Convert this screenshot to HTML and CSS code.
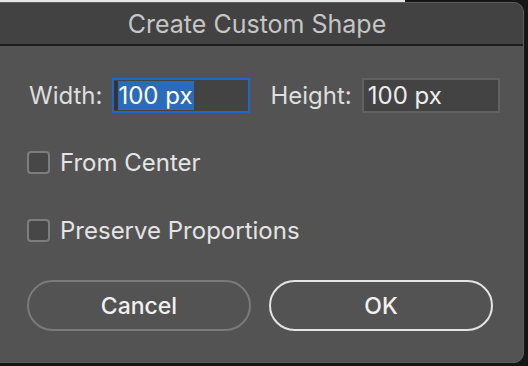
FILE: index.html
```html
<!DOCTYPE html>
<html lang="en">
<head>
  <meta charset="UTF-8">
  <title>Create Custom Shape</title>
  <link rel="stylesheet" href="styles.css">
</head>
<body>

<div class="top-strip"></div>

<!-- Dialog window -->
<div class="dialog">
  <div class="dialog-title">Create Custom Shape</div>

  <div class="dialog-body">
    <div class="size-row">
      <label class="field-label">Width:</label>
      <div class="field field-active">
        <span class="caret"></span><span class="selected">100 px</span>
      </div>
      <label class="field-label label-height">Height:</label>
      <div class="field">
        <span class="value">100 px</span>
      </div>
    </div>

    <div class="check-row first">
      <span class="checkbox"></span>
      <span class="check-label">From Center</span>
    </div>
    <div class="check-row">
      <span class="checkbox"></span>
      <span class="check-label">Preserve Proportions</span>
    </div>

    <div class="button-row">
      <button class="dlg-button cancel">Cancel</button>
      <button class="dlg-button ok">OK</button>
    </div>
  </div>
</div>

</body>
</html>
```

FILE: styles.css
```css
body {
  background-color: #161616;
  margin: 0;
  padding: 0;
  font-family: Inter, "Open Sans", sans-serif;
  overflow: hidden;
}

.top-strip {
  width: 405px;
  height: 2px;
  background: #e6e6e6;
}

.dialog {
  margin-left: -10px;
  width: 532px;
  height: 359px;
  background: #535353;
  border: 1px solid #5e5e5e;
  border-radius: 10px;
  overflow: hidden;
}

.dialog-title {
  height: 41px;
  background: #424242;
  border-bottom: 2px solid #1d1d1d;
  display: flex;
  justify-content: center;
  align-items: center;
  color: #c6c6c6;
  font-size: 25px;
}

.dialog-body {
  padding: 32px 0 0 36px;
}

.size-row {
  display: flex;
  align-items: center;
  height: 35px;
}

.field-label {
  color: #dedede;
  font-size: 24px;
  margin-left: 2px;
  margin-right: 10px;
}

.label-height {
  margin-left: 20px;
}

.field {
  box-sizing: border-box;
  width: 138px;
  height: 35px;
  background: #434343;
  border: 2px solid #616161;
  display: flex;
  align-items: center;
  color: #ededed;
  font-size: 24px;
  padding-left: 4px;
}

.field-active {
  border-color: #2366c4;
  padding: 1px 0;
  align-items: stretch;
}

.caret {
  width: 4px;
  background: #333;
}

.selected {
  background: #2c6bba;
  color: #fff;
  display: flex;
  align-items: center;
  padding-right: 1px;
}

.check-row {
  display: flex;
  align-items: center;
  gap: 10px;
  height: 23px;
  margin-top: 45px;
}

.check-row.first {
  margin-top: 38px;
}

.checkbox {
  box-sizing: border-box;
  width: 23px;
  height: 23px;
  border: 2px solid #7d7d7d;
  border-radius: 4px;
  background: #474747;
}

.check-label {
  color: #e4e4e4;
  font-size: 24px;
}

.button-row {
  display: flex;
  gap: 18px;
  margin-top: 38px;
}

.dlg-button {
  box-sizing: border-box;
  width: 224px;
  height: 51px;
  border-radius: 26px;
  background: transparent;
  font-family: Inter, "Open Sans", sans-serif;
  font-size: 23px;
  font-weight: 500;
  color: #f0f0f0;
  cursor: pointer;
}

.cancel {
  border: 2px solid #7a7a7a;
}

.ok {
  border: 2px solid #e4e4e4;
}
```
